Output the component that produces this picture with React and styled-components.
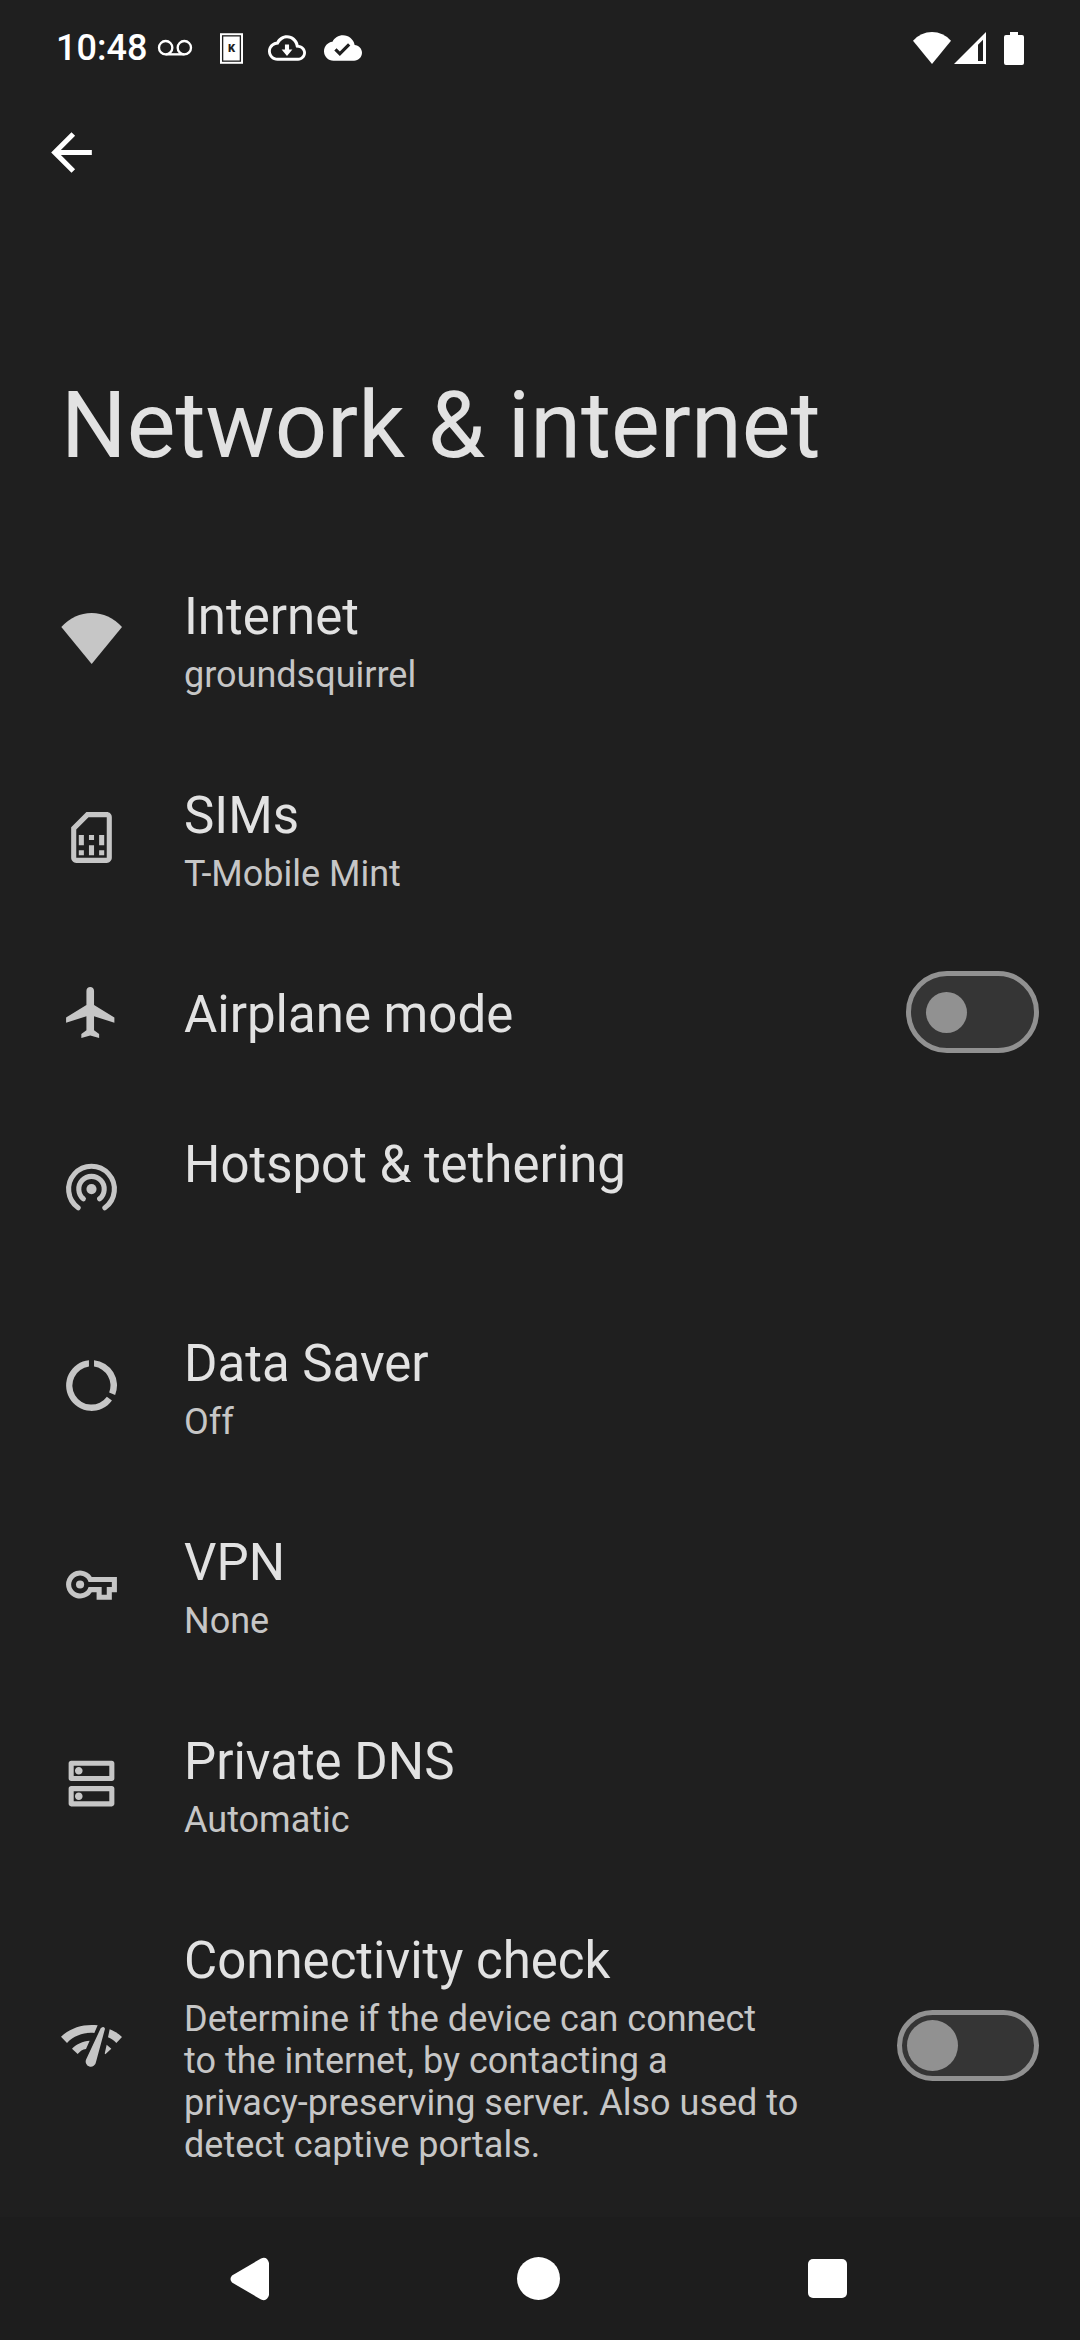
import React, { useState } from 'react'
import styled, { createGlobalStyle, css } from 'styled-components';

const settings = [
    { id: 'internet', title: 'Internet', summary: 'groundsquirrel', icon: <WifiIcon /> },
    { id: 'sims', title: 'SIMs', summary: 'T-Mobile Mint', icon: <SimIcon /> },
    { id: 'airplane', title: 'Airplane mode', toggle: 'tall', icon: <AirplaneIcon /> },
    { id: 'hotspot', title: 'Hotspot & tethering', summary: '', icon: <HotspotIcon /> },
    { id: 'data-saver', title: 'Data Saver', summary: 'Off', icon: <DataSaverIcon /> },
    { id: 'vpn', title: 'VPN', summary: 'None', icon: <KeyIcon /> },
    { id: 'dns', title: 'Private DNS', summary: 'Automatic', icon: <DnsIcon /> },
    {
        id: 'connectivity',
        title: 'Connectivity check',
        summary: 'Determine if the device can connect\nto the internet, by contacting a\nprivacy-preserving server. Also used to\ndetect captive portals.',
        toggle: 'wide',
        icon: <NetworkCheckIcon />,
    },
];

function App() {
    return (
        <Screen>
            <GlobalStyle />
            <StatusBar />
            <Toolbar>
                <BackButton aria-label="Navigate up">
                    <svg viewBox="0 0 24 24" width="61" height="61" fill="currentColor">
                        <path d="M20 11H7.83l5.59-5.59L12 4l-8 8 8 8 1.41-1.41L7.83 13H20v-2z" />
                    </svg>
                </BackButton>
            </Toolbar>
            <Heading>Network &amp; internet</Heading>
            <List>
                {settings.map((item) => (
                    <li key={item.id}>
                        {item.toggle ? <ToggleRow item={item} /> : <LinkRow item={item} />}
                    </li>
                ))}
            </List>
            <NavBar>
                <NavButton aria-label="Back">
                    <svg viewBox="0 0 39 44" width="39" height="44" fill="currentColor">
                        <path d="M31 1.5 2 18.5Q-1 22 2 25.5L31 42.5Q37 45 39 38V6Q37-1 31 1.5z" />
                    </svg>
                </NavButton>
                <NavButton aria-label="Home">
                    <svg viewBox="0 0 43 43" width="43" height="43" fill="currentColor">
                        <circle cx="21.5" cy="21.5" r="21.5" />
                    </svg>
                </NavButton>
                <NavButton aria-label="Recents">
                    <svg viewBox="0 0 39 39" width="39" height="39" fill="currentColor">
                        <rect width="39" height="39" rx="5" />
                    </svg>
                </NavButton>
            </NavBar>
        </Screen>
    );
}

function LinkRow({item}) {
    return (
        <RowLink href={`#${item.id}`}>
            {item.icon}
            <RowText item={item} />
        </RowLink>
    );
}

function ToggleRow({item}) {
    const [checked, setChecked] = useState(false);

    return (
        <RowLabel htmlFor={item.id}>
            {item.icon}
            <RowText item={item} />
            <Switch
                id={item.id}
                type="checkbox"
                $size={item.toggle}
                checked={checked}
                onChange={() => { setChecked(!checked) }}
            />
        </RowLabel>
    );
}

function RowText({item}) {
    return (
        <TextBox>
            <Title>{item.title}</Title>
            {item.summary !== undefined && <Summary>{item.summary}</Summary>}
        </TextBox>
    );
}

function StatusBar() {
    return (
        <StatusBox>
            <Clock>10:48</Clock>
            <StatusSlot>
                <svg viewBox="378 87 108 54" width="36" height="18" fill="none" stroke="currentColor" strokeWidth="7">
                    <circle cx="404" cy="113" r="20" />
                    <circle cx="460" cy="113" r="20" />
                    <path d="M404 133H460" />
                </svg>
            </StatusSlot>
            <StatusSlot>
                <svg viewBox="0 0 70 93" width="23" height="31">
                    <rect width="70" height="93" fill="#fff" />
                    <rect x="8" y="8" width="54" height="77" fill="none" stroke="#1f1f1f" strokeWidth="4" />
                    <text x="35" y="58" textAnchor="middle" fontSize="34" fontWeight="900" fill="#1f1f1f">K</text>
                </svg>
            </StatusSlot>
            <StatusSlot>
                <svg viewBox="0 0 24 24" width="38" height="38" fill="currentColor">
                    <path d="M19.35 10.04C18.67 6.59 15.64 4 12 4 9.11 4 6.6 5.64 5.35 8.04 2.34 8.36 0 10.91 0 14c0 3.31 2.69 6 6 6h13c2.76 0 5-2.24 5-5 0-2.64-2.05-4.78-4.65-4.96zM19 18.2H6c-2.21 0-4.2-1.99-4.2-4.2 0-2.05 1.73-3.86 3.76-4.07l1.07-.11.5-.95C8.08 7.14 9.94 5.8 12 5.8c2.62 0 4.88 2.06 5.39 4.63l.3 1.3 1.53.11c1.56.1 2.98 1.61 2.98 3.16 0 1.65-1.55 3.2-3.2 3.2z" />
                    <path d="M13.3 9.8h-2.6v3.2H8.6l3.4 4 3.4-4h-2.1z" />
                </svg>
            </StatusSlot>
            <StatusSlot>
                <svg viewBox="0 0 24 24" width="38" height="38" fill="currentColor">
                    <path d="M19.35 10.04C18.67 6.59 15.64 4 12 4 9.11 4 6.6 5.64 5.35 8.04 2.34 8.36 0 10.91 0 14c0 3.31 2.69 6 6 6h13c2.76 0 5-2.24 5-5 0-2.64-2.05-4.78-4.65-4.96zM10 17l-3.5-3.5 1.41-1.41L10 14.17 15.18 9l1.41 1.41L10 17z" />
                </svg>
            </StatusSlot>
            <StatusEnd>
                <svg viewBox="0 0 114 96" width="38" height="32" fill="currentColor">
                    <path d="M57 96 0 26Q24 0 57 0T114 26z" />
                </svg>
                <svg viewBox="0 0 96 96" width="32" height="32" fill="currentColor">
                    <path fillRule="evenodd" d="M0 96 96 0V96zM72 38V87H87V23z" />
                </svg>
                <Battery viewBox="0 0 60 99" width="20" height="33" fill="currentColor">
                    <path d="M18 0H42V9H54Q60 9 60 15V93Q60 99 54 99H6Q0 99 0 93V15Q0 9 6 9H18z" />
                </Battery>
            </StatusEnd>
        </StatusBox>
    );
}

function WifiIcon() {
    return (
        <RowIcon viewBox="0 0 183 183">
            <path d="M92 168 1 57Q40 15 92 15T183 57z" />
        </RowIcon>
    );
}

function SimIcon() {
    return (
        <RowIcon viewBox="0 0 24 24">
            <path d="M18 2h-8L4 8v12c0 1.1.9 2 2 2h12c1.1 0 2-.9 2-2V4c0-1.1-.9-2-2-2zm0 18H6V8.83L10.83 4H18v16z" />
            <path d="M7 17h2v2H7zM15 17h2v2h-2zM7 11h2v4H7zM11 15h2v4h-2zM11 11h2v2h-2zM15 11h2v4h-2z" />
        </RowIcon>
    );
}

function AirplaneIcon() {
    return (
        <RowIcon viewBox="0 0 24 24">
            <path d="M21 16v-2l-8-5V3.5C13 2.67 12.33 2 11.5 2S10 2.67 10 3.5V9l-8 5v2l8-2.5V19l-2 1.5V22l3.5-1 3.5 1v-1.5L13 19v-5.5l8 2.5z" />
        </RowIcon>
    );
}

function HotspotIcon() {
    return (
        <RowIcon viewBox="0 0 24 24">
            <circle cx="12" cy="13" r="2" />
            <path
                d="M6.75 20.35A9 9 0 1 1 17.25 20.35M8.8 16.85A5 5 0 1 1 15.2 16.85"
                fill="none"
                stroke="currentColor"
                strokeWidth="2"
                strokeLinecap="round"
            />
        </RowIcon>
    );
}

function DataSaverIcon() {
    return (
        <RowIcon viewBox="0 0 24 24">
            <path d="M13 2.05A10 10 0 0 1 21.3 15.75L18.95 14.75A7.5 7.5 0 0 0 13 4.57z" />
            <path d="M11 2.05A10 10 0 1 0 20.05 17.95L18.05 16.4A7.5 7.5 0 1 1 11 4.57z" />
        </RowIcon>
    );
}

function KeyIcon() {
    return (
        <RowIcon viewBox="0 0 24 24">
            <path
                fillRule="evenodd"
                d="M12.1 9H22v6h-2v3h-6v-3h-1.9A5.5 5.5 0 1 1 12.1 9zM10.85 11H20v2h-2v3h-2v-3h-5.15A3.5 3.5 0 1 1 10.85 11z"
            />
            <circle cx="7.5" cy="12" r="1.6" />
        </RowIcon>
    );
}

function DnsIcon() {
    return (
        <RowIcon viewBox="0 0 24 24">
            <path d="M19 15v4H5v-4h14m1-2H4c-.55 0-1 .45-1 1v6c0 .55.45 1 1 1h16c.55 0 1-.45 1-1v-6c0-.55-.45-1-1-1zM7 18.5c-.82 0-1.5-.67-1.5-1.5s.68-1.5 1.5-1.5 1.5.67 1.5 1.5-.67 1.5-1.5 1.5zM19 5v4H5V5h14m1-2H4c-.55 0-1 .45-1 1v6c0 .55.45 1 1 1h16c.55 0 1-.45 1-1V4c0-.55-.45-1-1-1zM7 8.5c-.82 0-1.5-.67-1.5-1.5S6.18 5.5 7 5.5s1.5.68 1.5 1.5S7.83 8.5 7 8.5z" />
        </RowIcon>
    );
}

function NetworkCheckIcon() {
    return (
        <RowIcon viewBox="15 15 183 183">
            <path d="M15 80C42 54 82 41 125 46L115 69C84 66 54 77 33 99z" />
            <path d="M48 116C62 102 80 93 101 92L90 117C80 118 72 124 65 132z" />
            <path d="M134 55 91 147A15.5 15.5 0 1 0 120 156L147 56Q144 47 134 55z" />
            <path d="M161 58C176 64 188 71 198 81L181 99C173 91 165 85 156 82z" />
            <path d="M152 104 166 116 148 133Q145 131 147 127z" />
        </RowIcon>
    );
}

export default App;


const GlobalStyle = createGlobalStyle`
  body {
    margin: 0;
    background: #1f1f1f;
    color: #e2e2e2;
    font-family: Roboto, "Noto Sans", sans-serif;
  }

  svg {
    display: block;
    flex-shrink: 0;
  }
`

const Screen = styled.main`
  min-height: 100vh;
  display: flex;
  flex-direction: column;
  background: #1f1f1f;
`

const StatusBox = styled.header`
  display: flex;
  align-items: center;
  height: 96px;
  padding: 0 56px;
  color: #fff;
`

const Clock = styled.time`
  font-size: 36px;
  line-height: 42px;
  font-weight: 500;
`

const StatusSlot = styled.span`
  display: flex;
  justify-content: center;
  width: 56px;
`

const StatusEnd = styled.div`
  display: flex;
  align-items: center;
  gap: 3px;
  margin-left: auto;
`

const Battery = styled.svg`
  margin-left: 15px;
`

const Toolbar = styled.div`
  display: flex;
  align-items: center;
  height: 113px;
  padding: 0 41px;
`

const plainButton = css`
  display: flex;
  align-items: center;
  justify-content: center;
  padding: 0;
  border: none;
  background: none;
  color: #fff;
`

const BackButton = styled.button`
  ${plainButton}
`

const Heading = styled.h1`
  margin: 163px 61px 59px;
  font-size: 92px;
  line-height: 108px;
  font-weight: 400;
`

const List = styled.ul`
  flex: 1;
  margin: 0;
  padding: 0;
  list-style: none;
`

const row = css`
  display: flex;
  align-items: center;
  padding: 0 41px 0 61px;
  color: inherit;
  text-decoration: none;
`

const RowLink = styled.a`
  ${row}
`

const RowLabel = styled.label`
  ${row}
`

const RowIcon = styled.svg`
  width: 61px;
  height: 61px;
  fill: currentColor;
  color: #c6c6c6;
`

const TextBox = styled.span`
  flex: 1;
  padding: 48px 0 42px 62px;
`

const Title = styled.span`
  display: block;
  font-size: 51px;
  line-height: 60px;
`

const Summary = styled.span`
  display: block;
  min-height: 42px;
  margin-top: 7px;
  font-size: 36px;
  line-height: 42px;
  color: #c6c6c6;
  white-space: pre-line;
`

const Switch = styled.input`
  appearance: none;
  box-sizing: border-box;
  flex-shrink: 0;
  display: flex;
  align-items: center;
  justify-content: ${({ checked }) => (checked ? 'flex-end' : 'flex-start')};
  width: ${({ $size }) => ($size === 'tall' ? '133px' : '142px')};
  height: ${({ $size }) => ($size === 'tall' ? '82px' : '71px')};
  margin: 0;
  padding: 0 ${({ $size }) => ($size === 'tall' ? '15px' : '5px')};
  border: 5px solid #919191;
  border-radius: 41px;
  background: #353535;

  &::before {
    content: "";
    width: ${({ $size }) => ($size === 'tall' ? '41px' : '51px')};
    height: ${({ $size }) => ($size === 'tall' ? '41px' : '51px')};
    border-radius: 50%;
    background: #919191;
  }
`

const NavBar = styled.nav`
  display: flex;
  justify-content: center;
  height: 123px;
  padding-right: 3px;
  background: #1d1d1d;
`

const NavButton = styled.button`
  ${plainButton}
  width: 289px;
`
